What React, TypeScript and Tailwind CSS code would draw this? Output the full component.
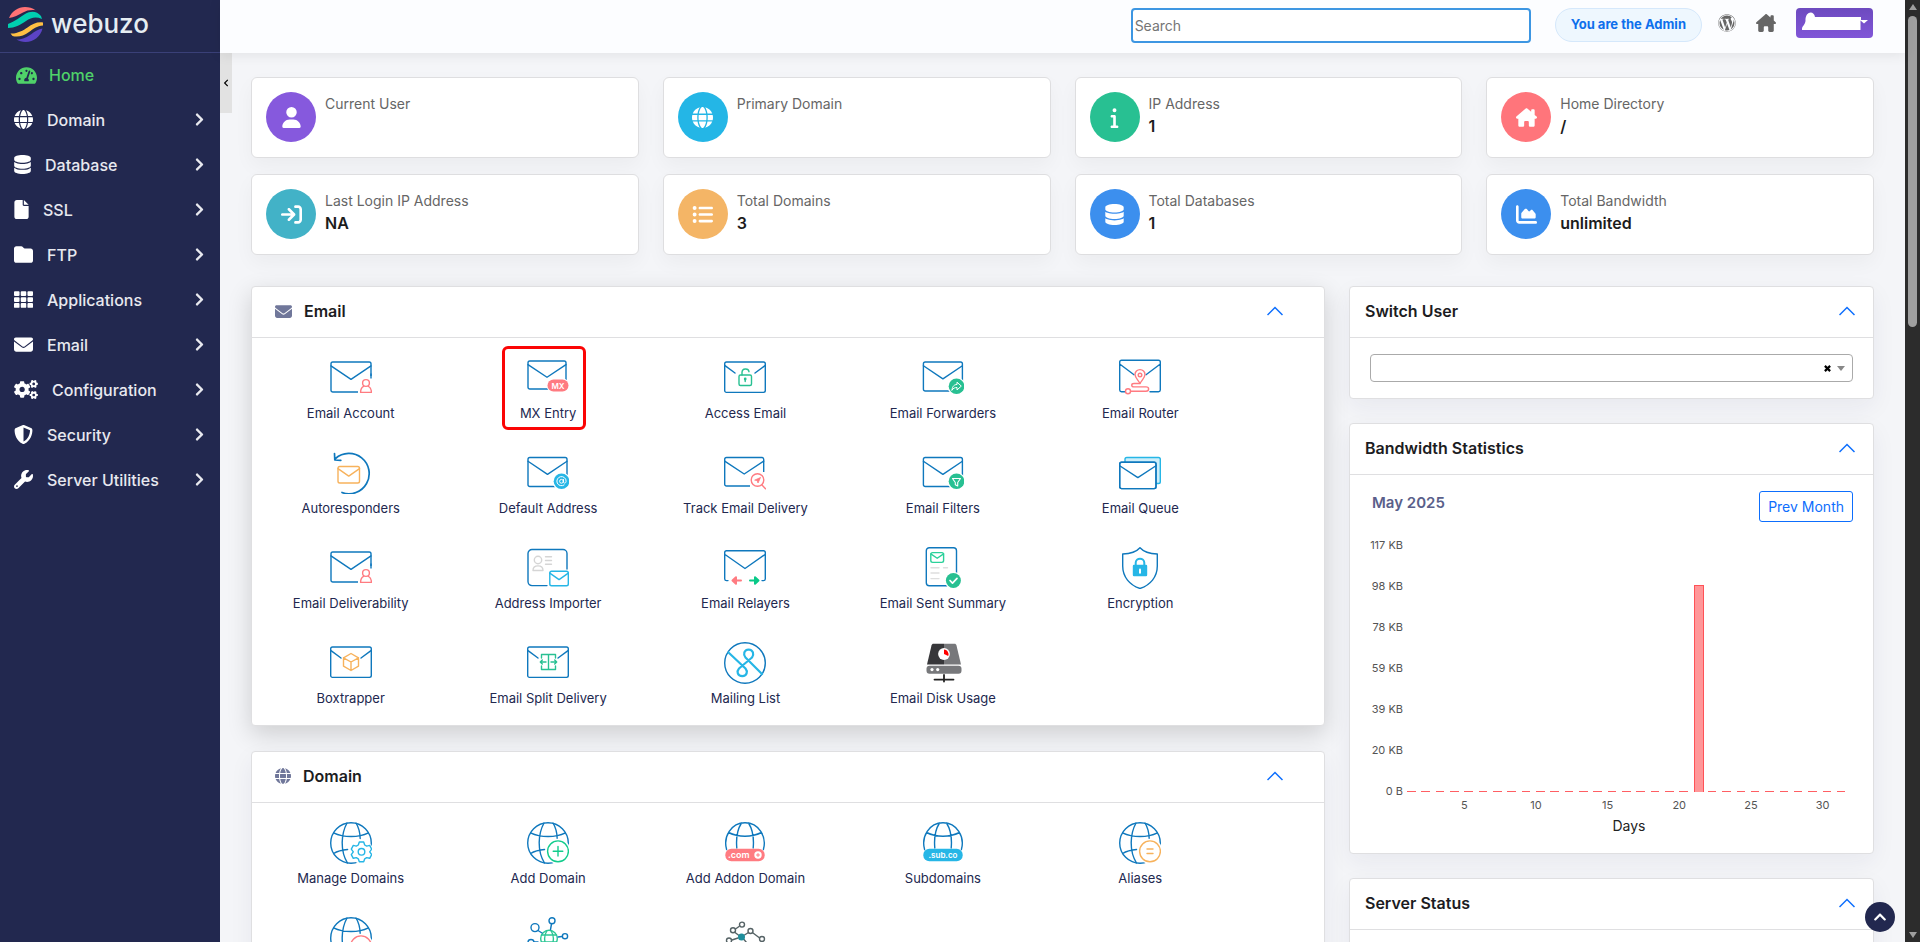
import type { ReactNode } from "react";
import { FaChevronLeft, FaChevronRight, FaChevronUp, FaCogs, FaTachometerAlt, FaTh } from "react-icons/fa";
import {
  FaArrowRightToBracket,
  FaChartArea,
  FaDatabase,
  FaEnvelope,
  FaFile,
  FaFolder,
  FaGlobe,
  FaHouseChimney,
  FaInfo,
  FaListUl,
  FaShieldHalved,
  FaUser,
  FaWordpress,
  FaWrench,
} from "react-icons/fa6";

const BLUE = "#0f78bd";
const SKY = "#26b6e6";
const GREEN = "#28c092";
const PINK = "#ff7b81";
const ORANGE = "#f7b25c";

/* ---------- icon parts, all drawn on a 42 x 42 grid ---------- */

function Icon({ children }: { children: ReactNode }) {
  return (
    <svg viewBox="0 0 42 42" width={42} height={42} fill="none" stroke={BLUE} strokeWidth={1.4} strokeLinecap="round" strokeLinejoin="round" aria-hidden="true">
      {children}
    </svg>
  );
}

function Letter({ x = 1, y = 5, w = 40, h = 30, color = BLUE }: { x?: number; y?: number; w?: number; h?: number; color?: string }) {
  const flap = h * 0.13;
  return (
    <g stroke={color}>
      <rect x={x} y={y} width={w} height={h} rx={1.8} />
      <path d={`M${x} ${y + flap}L${x + w / 2} ${y + h * 0.58}L${x + w} ${y + flap}`} />
    </g>
  );
}

function OpenLetter() {
  return (
    <>
      <rect x={0.7} y={5} width={40.6} height={30.4} rx={1.8} />
      <path d="M1 8.6L11 16M41 8.6L31 16" />
    </>
  );
}

function Person() {
  return (
    <>
      <path d="M28 19h14v19H28z" fill="#fff" stroke="none" />
      <path d="M41 17V21" />
      <g stroke={PINK}>
        <circle cx={36} cy={26} r={3.4} />
        <path d="M33.6 29.3c-2 .9-3 2.6-3 6.1h10.8c0-3.5-1-5.200-3-6.100" />
      </g>
    </>
  );
}

function Disc({ color, cx = 34.5, cy = 29.3, r = 7.8, children }: { color: string; cx?: number; cy?: number; r?: number; children: ReactNode }) {
  return (
    <>
      <circle cx={cx} cy={cy} r={r + 1.2} fill="#fff" stroke="none" />
      <circle cx={cx} cy={cy} r={r} fill={color} stroke="none" />
      <g stroke="#fff">{children}</g>
    </>
  );
}

function Globe() {
  return (
    <>
      <circle cx={21} cy={21} r={20.3} />
      <path d="M17 1C11 12 10 29 17.5 41M26 1c2.5 4 4 9 4.2 15.5M3.6 10.8c10 5 25 5 34.8 0M3.6 31.5c4-2.5 9-3.6 14-4" />
    </>
  );
}

function HalfGlobe() {
  return (
    <path d="M2.6 27.5C-1 15 7 .8 21 .8S43 15 39.4 27.5M17.5 1C13 8 12 17 12.8 26M24.5 1C29 8 30 17 29.2 26M4.5 10.5c10 5 23 5 33 0" />
  );
}

function Ring({ color, children }: { color: string; children: ReactNode }) {
  return (
    <>
      <circle cx={31} cy={29.3} r={12.5} fill="#fff" stroke="none" />
      <g stroke={color}>
        <circle cx={31} cy={29.3} r={10.4} />
        {children}
      </g>
    </>
  );
}

const emailAccount = <Icon><Letter /><Person /></Icon>;

const mxEntry = (
  <Icon>
    <Letter x={1} y={4} w={38} h={28} />
    <rect x={19.5} y={21.5} width={23} height={14} rx={7} fill="#fff" stroke="none" />
    <rect x={20.5} y={22.5} width={21} height={12} rx={6} fill={PINK} stroke="none" />
    <text x={31} y={31.5} fontSize={8} fontWeight={600} fill="#fff" stroke="none" textAnchor="middle">MX</text>
  </Icon>
);

const accessEmail = (
  <Icon>
    <OpenLetter />
    <g stroke={GREEN}>
      <rect x={15} y={18} width={12.5} height={10.5} rx={1.5} />
      <path d="M18 18v-2.5c0-4.6 6.5-4.6 7-.8M21.2 22v2.5" />
      <circle cx={21.2} cy={22} r={0.7} />
    </g>
  </Icon>
);

const emailForwarders = (
  <Icon>
    <Letter x={1.4} y={5} w={39} h={29} />
    <Disc color={GREEN}>
      <path strokeWidth={1} d="M30 33c.3-4 2.5-5.5 5-5.5v-2.3l4.3 3.9-4.3 3.8v-2.4c-2.200 0-3.6.6-5 2.5z" />
    </Disc>
  </Icon>
);

const emailRouter = (
  <Icon>
    <path d="M6 34.7H2.5A1.8 1.8 0 0 1 .7 33V5A1.8 1.8 0 0 1 2.5 3.2h37A1.8 1.8 0 0 1 41.3 5v28a1.8 1.8 0 0 1-1.8 1.7H31M1 7.2l14 10.5M41 7.2L27 17.7" />
    <g stroke={PINK}>
      <path d="M21 26.5c-2-3.5-5-6-5-8.9a5 5 0 0 1 10 0c0 2.9-3 5.4-5 8.9z" />
      <circle cx={21} cy={18} r={1.8} />
      <path d="M21 26.5h-6c-3 0-3 3.4 0 3.4h12c3.5 0 3.5 4.3 0 4.3H12" />
      <circle cx={9} cy={34.3} r={2.5} fill="#fff" />
    </g>
  </Icon>
);

const autoresponders = (
  <Icon>
    <path strokeWidth={1.7} d="M12 40.5A20.2 20.2 0 1 0 5.500 6.5M4.500 1.5l.3 6.5 6 .4" />
    <Letter x={8} y={14.5} w={21.5} h={16.5} color={ORANGE} />
  </Icon>
);

const defaultAddress = (
  <Icon>
    <Letter x={1} y={5.5} w={39} h={29} />
    <Disc color={SKY}>
      <circle cx={34.5} cy={29.3} r={1.9} strokeWidth={1} />
      <path strokeWidth={1} d="M36.5 27.5v2.5c0 1.8 2.6 1.5 2.6-.8a4.6 4.6 0 1 0-2 3.8" />
    </Disc>
  </Icon>
);

const trackDelivery = (
  <Icon>
    <Letter x={0.7} y={5.5} w={39} h={28.5} />
    <path d="M26 20h16v18H26z" fill="#fff" stroke="none" />
    <g stroke={PINK}>
      <circle cx={33.5} cy={28} r={6.3} />
      <path d="M38 33l3.5 3.7" />
      <path d="M31 28l5.5-2.5-2.5 5.5-.8-2.2z" fill={PINK} strokeWidth={0.8} />
    </g>
  </Icon>
);

const emailFilters = (
  <Icon>
    <Letter x={1.4} y={5.5} w={39} h={29} />
    <Disc color={GREEN}>
      <path strokeWidth={1.1} d="M30.5 26.5h8l-2.8 4v3.5l-2.400-1.200v-2.300z" />
    </Disc>
  </Icon>
);

const emailQueue = (
  <Icon>
    <rect x={6} y={5.5} width={35.3} height={26} rx={1.8} fill="#cdeefa" stroke={SKY} />
    <rect x={0.7} y={10.3} width={36.3} height={26.3} rx={1.8} fill="#fff" />
    <Letter x={0.7} y={10.3} w={36.3} h={26.3} />
  </Icon>
);

const addressImporter = (
  <Icon>
    <path d="M20 38.6H5a4 4 0 0 1-4-4V6.5a4 4 0 0 1 4-4h31a4 4 0 0 1 4 4V22" />
    <g stroke="#d5d5d5">
      <circle cx={11} cy={13} r={3.7} />
      <path d="M6 23.5c0-3 2-4.6 5-4.6s5 1.6 5 4.6zM18.5 9.7h6M18.5 13.5h6M18.5 17.3h6" />
    </g>
    <Letter x={22.8} y={24.2} w={18.5} h={14.5} color={SKY} />
  </Icon>
);

const emailRelayers = (
  <Icon>
    <path d="M4 33.6H2.5A1.8 1.8 0 0 1 .7 32V5.5a1.8 1.8 0 0 1 1.8-1.8h37a1.8 1.8 0 0 1 1.8 1.8V32a1.8 1.8 0 0 1-1.8 1.6H38M1 7.5l20 14 20-14" />
    <path d="M17 33.5H9.5M12 30.2l-3.5 3.3 3.5 3.3z" stroke={PINK} fill={PINK} strokeWidth={2} />
    <path d="M26 33.5h7.5M31 30.2l3.5 3.3-3.5 3.3z" stroke="#08c988" fill="#08c988" strokeWidth={2} />
  </Icon>
);

const sentSummary = (
  <Icon>
    <rect x={4.3} y={0.7} width={30.2} height={38} rx={3} />
    <Letter x={8.8} y={5.6} w={12.8} h={9.8} color="#2bd19a" />
    <path d="M9 20.7h8M21.5 20.7h4M9 26h8M9 31.6h8" stroke="#dedede" />
    <Disc color={GREEN} cx={31.4} cy={33.5} r={7.5}>
      <path strokeWidth={1.7} d="M28 33.5l2.5 2.6 4.500-4.700" />
    </Disc>
  </Icon>
);

const encryption = (
  <Icon>
    <path d="M21 .7c4.5 5 10 6 17.3 6.3V19c0 11-7 19-17.3 22.5C10.7 38 3.7 30 3.7 19V7C11 6.7 16.5 5.7 21 .7z" />
    <rect x={14.5} y={18.5} width={13} height={10} rx={0.5} fill={SKY} stroke={SKY} />
    <path d="M16.7 18v-2.2c0-5.3 8.6-5.3 8.6 0V18" stroke={SKY} strokeWidth={2} />
    <path d="M21 22.5v3.2" stroke="#fff" strokeWidth={2} />
  </Icon>
);

const boxtrapper = (
  <Icon>
    <OpenLetter />
    <path stroke={ORANGE} d="M21 11.5l7.5 4.3v8.4L21 28.5l-7.5-4.3v-8.4zM13.5 15.8L21 20l7.5-4.2M21 20v8.5" />
  </Icon>
);

const splitDelivery = (
  <Icon>
    <OpenLetter />
    <path stroke={GREEN} d="M21.500 12.5h-7v3.5M21.500 12.5v15h-7v-3.5M21.500 12.5h7v3.5M21.500 27.5h7v-3.5M19 20h-5.500m1.800-2L13.300 20l2 2M24 20h5.500m-1.800-2l2 2-2 2" />
  </Icon>
);

const mailingList = (
  <Icon>
    <circle cx={21} cy={21} r={20.3} />
    <path stroke={SKY} strokeWidth={2.2} d="M4.5 10.5L21.5 26.5c2.5 3 1.5 7.5-3.2 7.7-4.9-.2-5.9-4.7-3.3-7.7L28 15.5c2.3-3.2 1.3-7.7-3.4-8-4.6.3-5.7 4.8-3.1 8L38 32" />
  </Icon>
);

const diskUsage = (
  <Icon>
    <g stroke="none">
      <path d="M11.5 1.8H22v20.7H5L9.5 3.5c.3-1.2 1-1.7 2-1.7z" fill="#37373a" />
      <path d="M22 1.8h10.5c1 0 1.7.5 2 1.7l4.5 19H22z" fill="#77787b" />
      <rect x={4.5} y={23.7} width={35} height={8} rx={3} fill="#77787b" />
      <circle cx={22} cy={12} r={5.9} fill="#fff" />
      <path d="M22 12V7.500a4.700 4.700 0 0 1 4.200 6.500z" fill="#f00" />
      <circle cx={10} cy={27.6} r={1.6} fill="#fff" />
      <circle cx={15.7} cy={27.6} r={1.6} fill="#fff" />
    </g>
    <path stroke="#222" strokeWidth={1.8} d="M22 33v6.5M12.5 37.6h19" />
  </Icon>
);

const manageDomains = (
  <Icon>
    <Globe />
    <circle cx={31.5} cy={29.8} r={11.8} fill="#fff" stroke="none" />
    <g stroke={SKY}>
      <path d="M29.3 20h4.4l1 3 2 1.1 3-.7 2 3.7-2 2.7 2 2.8-2 3.7-3-.7-2 1.2-1 2.900h-4.400l-1-2.900-2-1.200-3 .7-2-3.700 2-2.800-2-2.700 2-3.700 3 .7 2-1.100z" />
      <circle cx={31.5} cy={29.8} r={3.3} />
    </g>
  </Icon>
);

const addDomain = (
  <Icon>
    <Globe />
    <Ring color="#12cc8c"><path d="M31 24.5v9.6M26.2 29.3h9.6" /></Ring>
  </Icon>
);

const addonDomain = (
  <Icon>
    <HalfGlobe />
    <rect x={1.3} y={26.8} width={39.4} height={12.5} rx={6} fill={PINK} stroke="none" />
    <text x={4} y={35.5} fontSize={9} fontWeight={600} fill="#fff" stroke="none">.com</text>
    <circle cx={34} cy={33} r={3.7} fill="#fff" stroke="none" />
    <path stroke={PINK} strokeWidth={1} d="M34 31.5v3M32.5 33h3" />
  </Icon>
);

const subdomains = (
  <Icon>
    <HalfGlobe />
    <rect x={1.3} y={26.8} width={39.4} height={12.5} rx={6} fill={SKY} stroke="none" />
    <text x={21} y={35.5} fontSize={8} fontWeight={600} fill="#fff" stroke="none" textAnchor="middle">.sub.co</text>
  </Icon>
);

const aliases = (
  <Icon>
    <Globe />
    <Ring color={ORANGE}><path d="M28 27h6M28 31.5h6" /></Ring>
  </Icon>
);

const pinkGlobe = (
  <Icon>
    <Globe />
    <Ring color={PINK}><path d="M27 29.3h8" /></Ring>
  </Icon>
);

const nodeGlobe = (
  <Icon>
    <g stroke="#2bc795">
      <circle cx={22} cy={21.5} r={8.3} />
      <path d="M20 13.5c-3 5-3 11 0 16M24 13.5c3 5 3 11 0 16M14.5 18h15M14.5 25h15" />
    </g>
    <path d="M11 13.5l4 2.5M24.5 7l-1 5.5M35 19.5l-4 .5M7 25h4" />
    <circle cx={8} cy={10.6} r={4} />
    <circle cx={25} cy={3.7} r={3} />
    <circle cx={38} cy={19.2} r={2.6} />
    <circle cx={4} cy={25.5} r={3} />
  </Icon>
);

const nodeTree = (
  <Icon>
    <g stroke="#566366">
      <path d="M11.5 12l3.5-2.5M11 15.5l4 3M20.5 18l4-2.5M29 16l6 4.5M14 21l-6 2M20 22.5l5 6" />
      <circle cx={18} cy={7.6} r={2.5} />
      <circle cx={9} cy={13.3} r={2.5} />
      <circle cx={26.5} cy={14} r={2.5} />
      <circle cx={38} cy={22} r={2.5} />
      <circle cx={5} cy={23.5} r={2.5} />
    </g>
    <circle cx={17.5} cy={20} r={3.5} fill="#1e8e9c" stroke="none" />
  </Icon>
);

/* ---------- data ---------- */

const navItems = [
  { label: "Domain", icon: FaGlobe, size: "w-[19px]" },
  { label: "Database", icon: FaDatabase, size: "w-[17px]" },
  { label: "SSL", icon: FaFile, size: "w-[15px]" },
  { label: "FTP", icon: FaFolder, size: "w-[19px]" },
  { label: "Applications", icon: FaTh, size: "w-[19px]" },
  { label: "Email", icon: FaEnvelope, size: "w-[19px]" },
  { label: "Configuration", icon: FaCogs, size: "w-[24px]" },
  { label: "Security", icon: FaShieldHalved, size: "w-[19px]" },
  { label: "Server Utilities", icon: FaWrench, size: "w-[19px]" },
];

const stats = [
  { label: "Current User", value: "", icon: FaUser, color: "bg-[#8659dd]" },
  { label: "Primary Domain", value: "", icon: FaGlobe, color: "bg-[#24b6e6]" },
  { label: "IP Address", value: "1", icon: FaInfo, color: "bg-[#28c092]" },
  { label: "Home Directory", value: "/", icon: FaHouseChimney, color: "bg-[#ff757b]" },
  { label: "Last Login IP Address", value: "NA", icon: FaArrowRightToBracket, color: "bg-[#42b2c7]" },
  { label: "Total Domains", value: "3", icon: FaListUl, color: "bg-[#f4b566]" },
  { label: "Total Databases", value: "1", icon: FaDatabase, color: "bg-[#3c8fee]" },
  { label: "Total Bandwidth", value: "unlimited", icon: FaChartArea, color: "bg-[#3c8fee]" },
];

interface Tool {
  label?: string;
  icon: ReactNode;
  marked?: boolean;
}

const emailTools: Tool[] = [
  { label: "Email Account", icon: emailAccount },
  { label: "MX Entry", icon: mxEntry, marked: true },
  { label: "Access Email", icon: accessEmail },
  { label: "Email Forwarders", icon: emailForwarders },
  { label: "Email Router", icon: emailRouter },
  { label: "Autoresponders", icon: autoresponders },
  { label: "Default Address", icon: defaultAddress },
  { label: "Track Email Delivery", icon: trackDelivery },
  { label: "Email Filters", icon: emailFilters },
  { label: "Email Queue", icon: emailQueue },
  { label: "Email Deliverability", icon: emailAccount },
  { label: "Address Importer", icon: addressImporter },
  { label: "Email Relayers", icon: emailRelayers },
  { label: "Email Sent Summary", icon: sentSummary },
  { label: "Encryption", icon: encryption },
  { label: "Boxtrapper", icon: boxtrapper },
  { label: "Email Split Delivery", icon: splitDelivery },
  { label: "Mailing List", icon: mailingList },
  { label: "Email Disk Usage", icon: diskUsage },
];

const domainTools: Tool[] = [
  { label: "Manage Domains", icon: manageDomains },
  { label: "Add Domain", icon: addDomain },
  { label: "Add Addon Domain", icon: addonDomain },
  { label: "Subdomains", icon: subdomains },
  { label: "Aliases", icon: aliases },
  { icon: pinkGlobe },
  { icon: nodeGlobe },
  { icon: nodeTree },
];

const yTicks = ["117 KB", "98 KB", "78 KB", "59 KB", "39 KB", "20 KB", "0 B"];
const usage = Array.from({ length: 31 }, (_, i) => (i === 20 ? 98 : 0));

/* ---------- layout ---------- */

function Logo() {
  return (
    <a href="#" className="flex h-[53px] items-center gap-2 border-b border-[#3a4078] pb-1 pl-2">
      <svg viewBox="0 0 35 35" width={35} height={35} aria-hidden="true">
        <path d="M1 11C4 4 10 0 17 0c4 0 7.5 1 10.5 3.2-5-.5-9 .3-12.500 2.300C10.500 8 6 10.500 1 11z" fill="#ff7275" />
        <path d="M0 17C7 14.5 12 10 17 7c6-3.5 12-3 16 2l1 3c-6-2.5-11-1.5-16 2-6 4-11 6.8-18 7z" fill="#00cfb0" />
        <path d="M2.5 26.5C9 27 15 23.5 19.5 20.5 24.5 17 29 14.8 35 15.5v3c-6 .5-10 3.5-14 6.5-5.5 4-11 5.5-16.5 4z" fill="#ffc043" />
        <path d="M8.5 32.5c6 .2 11-2.5 15-5.5 3.5-2.8 7-5 11-5.5C32.5 29.5 26 35 17.5 35c-3.5 0-6.5-1-9-2.5z" fill="#5b43c4" />
      </svg>
      <span className="text-[26px] leading-8 font-medium text-[#e6edf2]">webuzo</span>
    </a>
  );
}

function Sidebar() {
  return (
    <aside className="w-[220px] shrink-0 bg-[#22284f] text-base font-medium text-[#e8e9ef]">
      <Logo />
      <nav>
        <a href="#" className="flex h-11 items-center gap-3 pl-4 text-[#4fd169]">
          <FaTachometerAlt className="h-[19px] w-[21px]" />
          Home
        </a>
        {navItems.map(({ label, icon: NavIcon, size }) => (
          <a key={label} href="#" className="flex h-[45px] items-center pr-4 pl-3.5">
            <NavIcon className={`mr-3.5 h-[19px] text-white ${size}`} />
            {label}
            <FaChevronRight className="ml-auto h-[15px] w-[9px]" />
          </a>
        ))}
      </nav>
    </aside>
  );
}

function TopBar() {
  return (
    <header className="relative z-10 flex h-[53px] shrink-0 items-start justify-end bg-[#fcfdff] pt-2 pr-8 shadow-[0_2px_12px_rgba(0,0,0,0.08)]">
      <input
        type="text"
        aria-label="Search"
        placeholder="Search"
        className="mr-6 h-[35px] w-[400px] rounded border-2 border-[#3d96e2] bg-white px-0.5 text-sm text-gray-800 outline-none placeholder:text-[#757575]"
      />
      <span className="mr-4 flex h-[34px] items-center rounded-full border border-[#d5e8fb] bg-[#eef7fe] px-[15px] text-[13px] font-bold text-[#0d6fec]">
        You are the Admin
      </span>
      <a href="#" aria-label="WordPress" className="mt-1.5 mr-5 text-[#666]">
        <FaWordpress className="size-[18px]" />
      </a>
      <a href="#" aria-label="Home page" className="mt-1.5 mr-5 text-[#666]">
        <FaHouseChimney className="h-[18px] w-5" />
      </a>
      <button type="button" aria-label="Account menu" className="h-[30px] w-[77px] rounded bg-linear-to-b from-[#6d4abf] to-[#8156d8]">
        <svg viewBox="0 0 77 30" width={77} height={30} fill="#fff" aria-hidden="true">
          <path d="M6 21c0-3 3-4 3.500-8C9 3 18 2 19 9h46v3h7l-4 3.500-3.500-3v9.500H6z" />
        </svg>
      </button>
    </header>
  );
}

function Panel({ title, icon, wide, raised, children }: { title: string; icon?: ReactNode; wide?: boolean; raised?: boolean; children?: ReactNode }) {
  return (
    <section
      className={`rounded border border-[#dfdfe1] bg-white ${
        raised ? "shadow-[0_8px_24px_rgba(0,0,0,0.16)]" : "shadow-[0_8px_24px_rgba(34,40,79,0.06)]"
      }`}
    >
      <header className={`flex h-[51px] items-center border-b border-[#dfdfe1] pb-0.5 ${wide ? "pr-[41px] pl-[23px]" : "pr-[18px] pl-[15px]"}`}>
        {icon}
        <h2 className="text-base font-semibold text-[#1c1c22]">{title}</h2>
        <button type="button" aria-label={`Collapse ${title}`} className="ml-auto text-[#0d6efd]">
          <svg viewBox="0 0 16 10" width={16} height={10} fill="none" stroke="currentColor" strokeWidth={1.5}>
            <path d="M.5 9L8 1.5 15.5 9" />
          </svg>
        </button>
      </header>
      {children}
    </section>
  );
}

function ToolGrid({ tools }: { tools: Tool[] }) {
  return (
    <div className="grid grid-cols-5 gap-y-[29px] pt-[19px] pr-[85px] pb-[17px]">
      {tools.map(({ label, icon, marked }, i) => (
        <a key={i} href="#" className="relative flex flex-col items-center gap-1 text-[13px] leading-5 text-[#22284f]">
          {icon}
          {label}
          {marked && <span className="absolute -top-[11px] left-[53px] size-[84px] rounded-md border-3 border-[#fb0505]" />}
        </a>
      ))}
    </div>
  );
}

function SwitchUser() {
  return (
    <Panel title="Switch User">
      <div className="px-5 py-4">
        <div className="relative">
          <select aria-label="Switch User" className="block h-7 w-full appearance-none rounded border border-[#aaa] bg-white px-2">
            <option></option>
          </select>
          <div className="absolute inset-y-0 right-2 flex items-center gap-1.5">
            <button type="button" aria-label="Clear selection">
              <svg viewBox="0 0 8 8" width={7} height={7} stroke="#000" strokeWidth={2.5}>
                <path d="M1 1l6 6M7 1L1 7" />
              </svg>
            </button>
            <span className="border-x-4 border-t-5 border-x-transparent border-t-[#888]" />
          </div>
        </div>
      </div>
    </Panel>
  );
}

function Bandwidth() {
  return (
    <Panel title="Bandwidth Statistics">
      <div className="px-5 pt-4 pb-[17px]">
        <div className="flex items-start justify-between">
          <h3 className="pt-0.5 pl-0.5 text-[15px] leading-5 font-semibold text-[#5a5f8a]">May 2025</h3>
          <button type="button" className="h-[31px] rounded-[3px] border border-[#0d6efd] px-2 text-sm text-[#0d6efd]">
            Prev Month
          </button>
        </div>
        <div className="mt-[15px] flex gap-1">
          <div className="flex h-[262px] w-[33px] flex-col justify-between text-right text-[11px] leading-4 whitespace-nowrap text-[#545454]">
            {yTicks.map((t) => (
              <span key={t}>{t}</span>
            ))}
          </div>
          <div className="flex-1 pt-2 pr-0.5">
            <div className="flex h-[247px] items-end">
              {usage.map((kb, i) => (
                <div key={i} className="flex h-full flex-1 items-end">
                  {kb > 0 ? (
                    <div className="w-2.5 border border-b-0 border-[#ff5257] bg-[#ff9799]" style={{ height: `${(kb / 117) * 100}%` }} />
                  ) : (
                    <div className="h-px w-3/5 bg-[#ff5f63]" />
                  )}
                </div>
              ))}
            </div>
            <div className="mt-[5px] flex h-4 text-[11px] leading-4 text-[#545454]">
              {usage.map((_, i) => (
                <div key={i} className="flex flex-1">
                  {(i + 1) % 5 === 0 && <span className="flex w-0 justify-center">{i + 1}</span>}
                </div>
              ))}
            </div>
            <p className="mt-[3px] text-center text-sm text-[#222]">Days</p>
          </div>
        </div>
      </div>
    </Panel>
  );
}

function Scrollbar() {
  return (
    <div className="flex w-[15px] shrink-0 flex-col items-center justify-between bg-[#2c2c2c] py-1" aria-hidden="true">
      <div className="flex flex-col items-center gap-1.5">
        <span className="border-x-4 border-b-6 border-x-transparent border-b-[#9f9f9f]" />
        <span className="h-[33vh] w-[9px] rounded-full bg-[#9f9f9f]" />
      </div>
      <span className="border-x-4 border-t-6 border-x-transparent border-t-[#9f9f9f]" />
    </div>
  );
}

export default function App() {
  return (
    <div className="flex h-screen overflow-hidden bg-[#f4f5f8] font-['Inter','Liberation_Sans',sans-serif]">
      <Sidebar />
      <div className="relative flex min-w-0 flex-1 flex-col">
        <TopBar />
        <button type="button" aria-label="Collapse sidebar" className="absolute top-[53px] left-0 flex h-[60px] w-3 items-center justify-center bg-[#e2e2e2]">
          <FaChevronLeft className="size-2 text-black" />
        </button>
        <main className="min-h-0 flex-1 overflow-hidden px-[31px] pt-6">
          <div className="grid grid-cols-4 gap-x-6 gap-y-4">
            {stats.map(({ label, value, icon: StatIcon, color }) => (
              <div key={label} className="flex h-[81px] gap-[9px] rounded-md border border-[#dedee0] bg-white p-3.5 shadow-[0_8px_20px_rgba(0,0,0,0.04)]">
                <div className={`flex size-[50px] shrink-0 items-center justify-center rounded-full text-white ${color}`}>
                  <StatIcon className="size-[21px]" />
                </div>
                <div className="pt-0.5">
                  <div className="text-sm leading-5 text-[#666]">{label}</div>
                  <div className="text-base leading-6 font-semibold text-[#1c1c1c]">{value}</div>
                </div>
              </div>
            ))}
          </div>
          <div className="mt-[31px] grid grid-cols-3 items-start gap-6">
            <div className="col-span-2 flex flex-col gap-[25px]">
              <Panel title="Email" wide raised icon={<FaEnvelope className="mr-3 size-[17px] text-[#70779a]" />}>
                <ToolGrid tools={emailTools} />
              </Panel>
              <Panel title="Domain" wide icon={<FaGlobe className="mr-3 size-4 text-[#70779a]" />}>
                <ToolGrid tools={domainTools} />
              </Panel>
            </div>
            <div className="flex flex-col gap-6">
              <SwitchUser />
              <Bandwidth />
              <Panel title="Server Status">
                <div className="h-40" />
              </Panel>
            </div>
          </div>
        </main>
        <button type="button" aria-label="Back to top" className="absolute right-2.5 bottom-2.5 flex size-[30px] items-center justify-center rounded-full bg-[#22284f] text-white">
          <FaChevronUp className="size-3.5" />
        </button>
      </div>
      <Scrollbar />
    </div>
  );
}
